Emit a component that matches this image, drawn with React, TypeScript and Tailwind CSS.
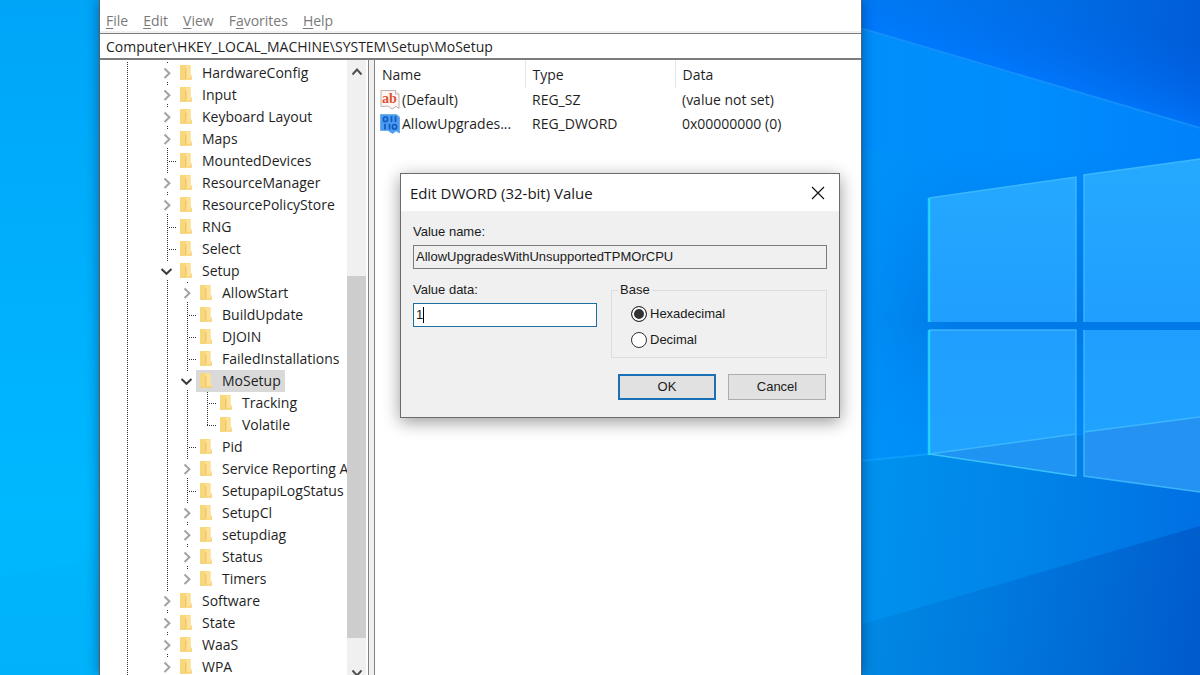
import type { ReactNode } from "react";

type Guide = "none" | "line" | "leaf" | "last" | "closed" | "closedLast" | "open";
type Node = { name: string; guides: Guide[]; selected?: boolean };

const nodes: Node[] = [
  { name: "HardwareConfig", guides: ["closed"] },
  { name: "Input", guides: ["closed"] },
  { name: "Keyboard Layout", guides: ["closed"] },
  { name: "Maps", guides: ["closed"] },
  { name: "MountedDevices", guides: ["leaf"] },
  { name: "ResourceManager", guides: ["closed"] },
  { name: "ResourcePolicyStore", guides: ["closed"] },
  { name: "RNG", guides: ["leaf"] },
  { name: "Select", guides: ["leaf"] },
  { name: "Setup", guides: ["open"] },
  { name: "AllowStart", guides: ["line", "closed"] },
  { name: "BuildUpdate", guides: ["line", "leaf"] },
  { name: "DJOIN", guides: ["line", "leaf"] },
  { name: "FailedInstallations", guides: ["line", "leaf"] },
  { name: "MoSetup", guides: ["line", "open"], selected: true },
  { name: "Tracking", guides: ["line", "line", "leaf"] },
  { name: "Volatile", guides: ["line", "line", "last"] },
  { name: "Pid", guides: ["line", "leaf"] },
  { name: "Service Reporting API", guides: ["line", "closed"] },
  { name: "SetupapiLogStatus", guides: ["line", "leaf"] },
  { name: "SetupCl", guides: ["line", "closed"] },
  { name: "setupdiag", guides: ["line", "closed"] },
  { name: "Status", guides: ["line", "closed"] },
  { name: "Timers", guides: ["line", "closedLast"] },
  { name: "Software", guides: ["closed"] },
  { name: "State", guides: ["closed"] },
  { name: "WaaS", guides: ["closed"] },
  { name: "WPA", guides: ["closed"] },
];

const guidePaths: Record<Guide, string> = {
  none: "",
  line: "M10.5 0V22",
  leaf: "M10.5 0V22M12 11.5H20",
  last: "M10.5 0V11M10 11.5H20",
  closed: "M10.5 0V2M10.5 20V22",
  closedLast: "M10.5 0V2",
  open: "M10.5 0V2M10.5 20V22",
};

function GuideCell({ kind }: { kind: Guide }) {
  return (
    <svg className="h-[22px] w-5 shrink-0" viewBox="0 0 20 22" fill="none" aria-hidden="true">
      <path d={guidePaths[kind]} stroke="#333" strokeDasharray="1 1" shapeRendering="crispEdges" />
      {(kind === "closed" || kind === "closedLast") && (
        <path d="M7.500 6.500L12.400 11.200L7.500 16" stroke="#a3a3a3" strokeWidth="2" />
      )}
      {kind === "open" && <path d="M4.500 9L9.500 13.800L14.500 9" stroke="#3c3c3c" strokeWidth="2" />}
    </svg>
  );
}

function Folder() {
  return (
    <svg className="h-4 w-3 shrink-0" viewBox="0 0 12 16" aria-hidden="true">
      <path d="M0 0H10.500V9.500L12 11V14.500H0Z" fill="#fbdc85" />
      <path d="M0 0H5V2L6 3V14.500H0Z" fill="#f8d67c" />
      <path d="M6 1H10.500V13H6Z" fill="#fde19a" />
      <path d="M5 4L6.500 3V12L5 14Z" fill="#efc763" />
      <path d="M0 13.700H12V14.500H0Z" fill="#f0cb6a" />
    </svg>
  );
}

function TreeRow({ node }: { node: Node }) {
  return (
    <li className="flex h-[22px] items-center">
      <GuideCell kind="line" />
      <GuideCell kind="none" />
      {node.guides.map((g, i) => (
        <GuideCell key={i} kind={g} />
      ))}
      <span
        className={
          node.selected
            ? "-ml-px flex h-[22px] items-center gap-[10px] bg-[#d9d9d9] px-1 whitespace-nowrap"
            : "-ml-px flex h-[22px] items-center gap-[10px] px-1 whitespace-nowrap"
        }
      >
        <Folder />
        {node.name}
      </span>
    </li>
  );
}

function StringIcon() {
  return (
    <svg className="h-5 w-5 shrink-0" viewBox="0 0 20 20" aria-hidden="true">
      <path d="M1 .5H15.500L19 4V18.500L16 16.500L12 19L8 16L1 16.500Z" fill="#fdf6f2" stroke="#bdb2ad" />
      <path d="M15.500 .5V4H19" fill="#fff" stroke="#bdb2ad" />
      <text x="9.500" y="12.500" textAnchor="middle" fontFamily="Liberation Serif, serif" fontWeight="700" fontSize="14" fill="#dd5233">
        ab
      </text>
    </svg>
  );
}

function BinaryIcon() {
  return (
    <svg className="h-5 w-5 shrink-0" viewBox="0 0 20 20" aria-hidden="true">
      <path d="M.5 .5H16.500L19.500 3V19L16 17L12.500 19.500L8 16.500L.5 16.500Z" fill="#4b9cf0" stroke="#74aee6" />
      <g fill="none" stroke="#1159bd" strokeWidth="1.700">
        <rect x="3.500" y="3" width="4" height="4.500" rx="1.800" />
        <path d="M11.500 2.300V8M15.500 2.300V8M5 9.800V15.500M9.500 9.800V15.500" />
        <rect x="12.500" y="10.500" width="4" height="4.500" rx="1.800" />
      </g>
    </svg>
  );
}

function Wallpaper() {
  return (
    <svg className="absolute inset-0 h-full w-full" viewBox="0 0 1200 675" preserveAspectRatio="none" aria-hidden="true">
      <defs>
        <linearGradient id="left" x1="0" y1="0" x2="0" y2="1">
          <stop offset="0" stopColor="#00a5f8" />
          <stop offset=".75" stopColor="#00b8ff" />
          <stop offset="1" stopColor="#00b2fb" />
        </linearGradient>
        <linearGradient id="sky" x1="860" y1="10" x2="1200" y2="60" gradientUnits="userSpaceOnUse">
          <stop offset="0" stopColor="#0082ec" />
          <stop offset=".5" stopColor="#006fe6" />
          <stop offset="1" stopColor="#005cd8" />
        </linearGradient>
        <linearGradient id="glow" x1="1130" y1="108" x2="1155" y2="30" gradientUnits="userSpaceOnUse">
          <stop offset="0" stopColor="#0078ff" stopOpacity=".8" />
          <stop offset="1" stopColor="#0066ee" stopOpacity="0" />
        </linearGradient>
        <linearGradient id="beam" x1="860" y1="0" x2="1200" y2="0" gradientUnits="userSpaceOnUse">
          <stop offset="0" stopColor="#008ffa" />
          <stop offset=".5" stopColor="#008dfd" />
          <stop offset="1" stopColor="#0082fa" />
        </linearGradient>
        <linearGradient id="dim" x1="0" y1="150" x2="0" y2="460" gradientUnits="userSpaceOnUse">
          <stop offset="0" stopColor="#0078e6" stopOpacity="0" />
          <stop offset=".55" stopColor="#0078e6" stopOpacity="1" />
          <stop offset="1" stopColor="#0088f4" stopOpacity=".3" />
        </linearGradient>
        <linearGradient id="edge" x1="860" y1="0" x2="960" y2="0" gradientUnits="userSpaceOnUse">
          <stop offset="0" stopColor="#0092f8" stopOpacity=".9" />
          <stop offset="1" stopColor="#0090f8" stopOpacity="0" />
        </linearGradient>
        <linearGradient id="lower" x1="860" y1="500" x2="1200" y2="530" gradientUnits="userSpaceOnUse">
          <stop offset="0" stopColor="#0092ee" />
          <stop offset=".5" stopColor="#0084e8" />
          <stop offset="1" stopColor="#0070e4" />
        </linearGradient>
        <linearGradient id="floor" x1="860" y1="620" x2="1200" y2="675" gradientUnits="userSpaceOnUse">
          <stop offset="0" stopColor="#008ae4" />
          <stop offset=".45" stopColor="#0076dc" />
          <stop offset="1" stopColor="#005acb" />
        </linearGradient>
        <linearGradient id="pane" x1="0" y1="170" x2="0" y2="480" gradientUnits="userSpaceOnUse">
          <stop offset="0" stopColor="#25a9ff" />
          <stop offset=".5" stopColor="#209eff" />
          <stop offset="1" stopColor="#20a4ff" />
        </linearGradient>
      </defs>
      <rect width="600" height="675" fill="url(#left)" />
      <path d="M0 577L100 559V675H0Z" fill="#00b2f8" opacity=".3" />
      <rect x="600" width="600" height="675" fill="url(#sky)" />
      <path d="M860 0H1200V129L860 29Z" fill="url(#glow)" />
      <path d="M850 26L1200 129V430L850 463Z" fill="url(#beam)" />
      <path d="M860 150H1200V430L860 463Z" fill="url(#dim)" />
      <path d="M860 150H960V453L860 463Z" fill="url(#edge)" />
      <path d="M860 28L1200 128" stroke="#1a9bff" strokeWidth="2" opacity=".7" />
      <path d="M850 462L930 455L1200 420V527L850 628Z" fill="url(#lower)" />
      <path d="M850 628L1200 526V675H850Z" fill="url(#floor)" />
      <path d="M850 462L930 454" stroke="#12a4ff" strokeWidth="2" opacity=".7" />
      <path d="M929 198L1076 177V322H929Z" fill="url(#pane)" />
      <path d="M1084 175L1200 159V322H1084Z" fill="url(#pane)" />
      <path d="M929 330H1076V476L929 454Z" fill="url(#pane)" />
      <path d="M1084 330H1200V492L1084 476Z" fill="url(#pane)" />
      <path d="M929 454L1076 434V476Z" fill="#2094f2" />
      <path d="M1084 432L1200 417V492L1084 476Z" fill="#2492f2" />
      <g fill="none" stroke="#42bcff" strokeWidth="1.500" opacity=".85">
        <path d="M929 198L1076 177V322M929 330H1076V476M929 454L1076 434M1084 432L1200 417M1084 322V175L1200 159M1084 330V476L1200 492" />
        <path d="M929 454L1076 476" stroke="#40cbff" />
        <path d="M929 322V198M929 330V455" stroke="#25ddfc" strokeWidth="2.500" />
      </g>
    </svg>
  );
}

function MenuItem({ k, before = "", after }: { k: string; before?: string; after: string }) {
  return (
    <button type="button" className="text-[#7a7a7a]">
      {before}
      <span className="underline decoration-1 underline-offset-2">{k}</span>
      {after}
    </button>
  );
}

function Row({ icon, cells }: { icon: ReactNode; cells: string[] }) {
  return (
    <tr className="h-6">
      <td className="p-0 pl-[5px]">
        <span className="flex items-center gap-[2px] whitespace-nowrap">
          {icon}
          {cells[0]}
        </span>
      </td>
      <td className="p-0 pl-[7px]">{cells[1]}</td>
      <td className="p-0 pl-[7px]">{cells[2]}</td>
    </tr>
  );
}

function EditDialog() {
  return (
    <form
      role="dialog"
      aria-label="Edit DWORD (32-bit) Value"
      className="absolute top-[173px] left-[400px] w-[440px] border border-[#6b6b6b] bg-[#f0f0f0] pb-[17px] font-['Liberation_Sans',Arial,sans-serif] text-[13px] leading-4 text-[#1a1a1a] shadow-[0_4px_16px_rgba(0,0,0,0.4)]"
    >
      <header className="flex h-[37px] items-center justify-between bg-white pr-[14px] pl-[9px]">
        <h2 className="font-['Open_Sans','Noto_Sans',sans-serif] text-[15px]">Edit DWORD (32-bit) Value</h2>
        <button type="button" aria-label="Close">
          <svg className="h-[14px] w-[14px]" viewBox="0 0 14 14" stroke="#111" strokeWidth="1.200">
            <path d="M1 1L13 13M13 1L1 13" />
          </svg>
        </button>
      </header>
      <div className="px-3 pt-[13px]">
        <label htmlFor="value-name" className="block">Value name:</label>
        <input
          id="value-name"
          readOnly
          defaultValue="AllowUpgradesWithUnsupportedTPMOrCPU"
          className="mt-[5px] block h-6 w-full border border-[#7a7a7a] bg-[#f0f0f0] px-[2px] pb-[2px] outline-none"
        />
        <div className="mt-[13px] flex items-start gap-[14px]">
          <div className="w-[184px]">
            <label htmlFor="value-data" className="block">Value data:</label>
            <div className="relative mt-[5px]">
              <input
                id="value-data"
                defaultValue="1"
                className="block h-6 w-full border border-[#1c6f9f] bg-white px-[2px] pb-[2px] outline-none"
              />
              <span className="absolute top-1 left-[10px] h-4 w-px bg-black" />
            </div>
          </div>
          <fieldset className="h-[76px] flex-1 border border-[#dcdcdc] px-[19px]">
            <legend className="-ml-[13px] px-[2px]">Base</legend>
            <div className="flex flex-col gap-[10px] pt-2">
              {["Hexadecimal", "Decimal"].map((name, i) => (
                <label key={name} className="flex items-center gap-[3px]">
                  <input
                    type="radio"
                    name="base"
                    defaultChecked={i === 0}
                    className="h-4 w-4 appearance-none rounded-full border border-[#333] bg-white checked:bg-[#333] checked:shadow-[inset_0_0_0_2px_white]"
                  />
                  {name}
                </label>
              ))}
            </div>
          </fieldset>
        </div>
        <div className="mt-4 flex justify-end gap-3 pr-px">
          <button type="button" className="h-[26px] w-[98px] border-2 border-[#1a6fb5] bg-[#e1e1e1]">OK</button>
          <button type="button" className="h-[26px] w-[98px] border border-[#adadad] bg-[#e1e1e1]">Cancel</button>
        </div>
      </div>
    </form>
  );
}

export default function App() {
  return (
    <div className="relative h-screen w-full overflow-hidden bg-[#008cf5] font-['Open_Sans','Noto_Sans',sans-serif] text-sm text-[#1f1f1f]">
      <Wallpaper />
      <main className="absolute inset-y-0 left-[99px] flex w-[763px] flex-col border-r border-l border-[#56606a] bg-white shadow-[0_0_12px_rgba(0,20,60,0.45)]">
        <nav className="flex h-[33px] shrink-0 items-center gap-[15px] border-b-2 border-[#f0f0f0] px-[6px] pt-[10px]">
          <MenuItem k="F" after="ile" />
          <MenuItem k="E" after="dit" />
          <MenuItem k="V" after="iew" />
          <MenuItem before="F" k="a" after="vorites" />
          <MenuItem k="H" after="elp" />
        </nav>
        <input
          aria-label="Address"
          defaultValue="Computer\HKEY_LOCAL_MACHINE\SYSTEM\Setup\MoSetup"
          className="h-[27px] shrink-0 border-t border-b-2 border-[#7c7c7c] px-[6px] outline-none"
        />
        <div className="flex min-h-0 flex-1 bg-[#f0f0f0]">
          <section className="flex w-[269px] shrink-0 border-r border-[#828282] bg-white">
            <ul className="min-w-0 flex-1 overflow-hidden pt-[2px] pl-[17px]">
              {nodes.map((n) => (
                <TreeRow key={n.name} node={n} />
              ))}
            </ul>
            <div className="mr-[2px] flex w-[19px] shrink-0 flex-col items-center bg-[#f0f0f0]">
              <svg className="mt-1 h-4 w-3 shrink-0" viewBox="0 0 12 16" fill="none" stroke="#505050" strokeWidth="2">
                <path d="M1.500 10.500L6 5.500L10.500 10.500" />
              </svg>
              <div className="mt-[196px] h-[362px] w-full shrink-0 bg-[#cdcdcd]" />
              <svg className="mt-7 h-4 w-3 shrink-0" viewBox="0 0 12 16" fill="none" stroke="#505050" strokeWidth="2">
                <path d="M1.500 4.500L6 9.500L10.500 4.500" />
              </svg>
            </div>
          </section>
          <section className="ml-[5px] min-w-0 flex-1 border-l border-[#828282] bg-white">
            <table className="w-full table-fixed border-collapse text-left">
              <thead>
                <tr className="h-7">
                  <th className="w-[150px] border-r border-[#e5e5e5] p-0 pt-[2px] pl-[7px] font-normal">Name</th>
                  <th className="w-[150px] border-r border-[#e5e5e5] p-0 pt-[2px] pl-[7px] font-normal">Type</th>
                  <th className="p-0 pt-[2px] pl-[7px] font-normal">Data</th>
                </tr>
              </thead>
              <tbody>
                <Row icon={<StringIcon />} cells={["(Default)", "REG_SZ", "(value not set)"]} />
                <Row icon={<BinaryIcon />} cells={["AllowUpgrades...", "REG_DWORD", "0x00000000 (0)"]} />
              </tbody>
            </table>
          </section>
        </div>
      </main>
      <EditDialog />
    </div>
  );
}
